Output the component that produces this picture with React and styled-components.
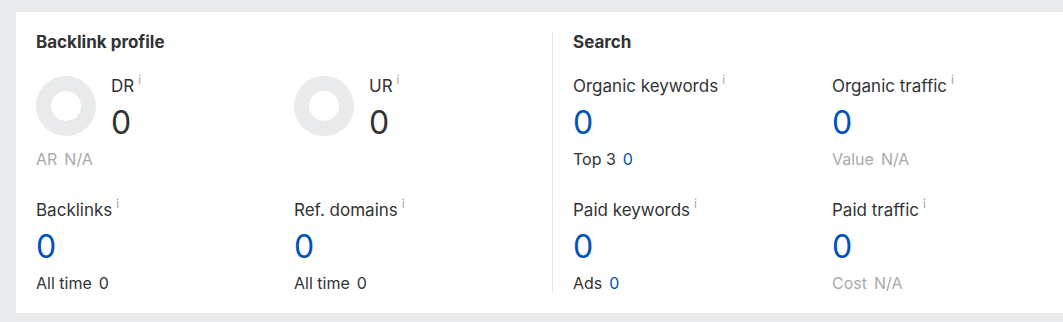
import React from "react";
import styled, { createGlobalStyle } from "styled-components";

const GlobalStyle = createGlobalStyle`
  html, body {
    margin: 0;
    background: #e9eaec;
    font-family: Inter, "Noto Sans", Arial, sans-serif;
    color: #333;
  }
`;

const Card = styled.div`
  display: flex;
  margin: 12px 0 0 16px;
  padding: 20px 0 20px 20px;
  background: #fff;
  box-shadow: 0 1px 0 #dddee1;
`;

const Section = styled.section`
  width: 496px;
  padding-right: 20px;
  padding-left: ${(p) => (p.$divided ? "20px" : "0")};
  border-left: ${(p) => (p.$divided ? "1px solid #e5e6e8" : "none")};
`;

const Title = styled.h2`
  margin: 0 0 24px;
  font-size: 17px;
  line-height: 20px;
  font-weight: 700;
  color: #333;
`;

const Grid = styled.div`
  display: grid;
  grid-template-columns: 238px 238px;
  column-gap: ${(p) => p.$gap || 20}px;
  row-gap: 31px;
`;

const Cell = styled.div`
  display: flex;
  flex-direction: column;
`;

const Top = styled.div`
  display: flex;
  gap: 15px;
`;

const Donut = styled.div`
  width: 30px;
  height: 30px;
  flex: none;
  border-radius: 50%;
  border: 15px solid #e9eaec;
`;

const Label = styled.div`
  font-size: 17px;
  line-height: 20px;
  color: #333;
  white-space: nowrap;
`;

const Info = styled.span`
  display: inline-block;
  vertical-align: top;
  margin: -2px 0 0 4px;
  font-size: 12px;
  line-height: 12px;
  color: #a6a6a6;
`;

const Value = styled.div`
  margin: 7px 0 6px;
  font-size: 32px;
  line-height: 40px;
  color: ${(p) => (p.$plain ? "#333" : "#0053b8")};
`;

const Sub = styled.div`
  display: flex;
  gap: 7px;
  font-size: 16px;
  line-height: 20px;
  color: ${(p) => (p.$muted ? "#aaa" : "#333")};
`;

const SubValue = styled.span`
  color: ${(p) => (p.$link ? "#0053b8" : "inherit")};
`;

const Metric = ({ m }) => {
  const body = (
    <div>
      <Label>
        {m.label}
        <Info>i</Info>
      </Label>
      <Value $plain={m.plain}>{m.value}</Value>
    </div>
  );
  return (
    <Cell>
      {m.donut ? (
        <Top>
          <Donut />
          {body}
        </Top>
      ) : (
        body
      )}
      {m.sub && (
        <Sub $muted={m.muted}>
          <span>{m.sub}</span>
          <SubValue $link={m.link}>{m.subValue}</SubValue>
        </Sub>
      )}
    </Cell>
  );
};

const backlinks = [
  { label: "DR", value: "0", plain: true, donut: true, sub: "AR", subValue: "N/A", muted: true },
  { label: "UR", value: "0", plain: true, donut: true },
  { label: "Backlinks", value: "0", sub: "All time", subValue: "0" },
  { label: "Ref. domains", value: "0", sub: "All time", subValue: "0" },
];

const search = [
  { label: "Organic keywords", value: "0", sub: "Top 3", subValue: "0", link: true },
  { label: "Organic traffic", value: "0", sub: "Value", subValue: "N/A", muted: true },
  { label: "Paid keywords", value: "0", sub: "Ads", subValue: "0", link: true },
  { label: "Paid traffic", value: "0", sub: "Cost", subValue: "N/A", muted: true },
];

const App = () => {
  return (
    <>
      <GlobalStyle />
      <Card>
        <Section>
          <Title>Backlink profile</Title>
          <Grid>
            {backlinks.map((m) => (
              <Metric key={m.label} m={m} />
            ))}
          </Grid>
        </Section>
        <Section $divided>
          <Title>Search</Title>
          <Grid $gap={21}>
            {search.map((m) => (
              <Metric key={m.label} m={m} />
            ))}
          </Grid>
        </Section>
      </Card>
    </>
  );
};

export default App;
